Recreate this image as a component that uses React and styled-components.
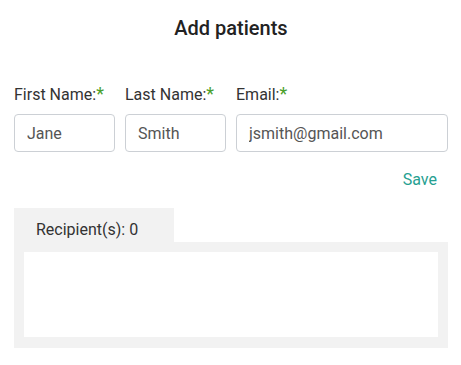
import React from "react";
import styled, { createGlobalStyle } from "styled-components";

const Global = createGlobalStyle`
  html, body { margin: 0; padding: 0; background: #fff; }
  body { font-family: Roboto, "Noto Sans", Arial, sans-serif; }
  * { box-sizing: border-box; }
`;

const Page = styled.div`
  width: 461px;
  padding: 0 13px 0 14px;
  display: flex;
  flex-direction: column;
`;

const Title = styled.h1`
  margin: 0;
  height: 56px;
  line-height: 56px;
  text-align: center;
  font-size: 20px;
  font-weight: 500;
  color: #222;
`;

const FieldsRow = styled.div`
  display: flex;
  gap: 10px;
  margin-top: 26px;
`;

const Field = styled.div`
  display: flex;
  flex-direction: column;
  width: ${(p) => p.$w}px;
  flex: ${(p) => (p.$grow ? "1 1 auto" : "0 0 auto")};
`;

const Label = styled.label`
  font-size: 16px;
  line-height: 24px;
  color: #333;
  white-space: nowrap;
  margin-bottom: 7px;
`;

const Star = styled.span`
  color: #4aa02c;
  font-size: 18px;
`;

const Input = styled.input`
  height: 38px;
  width: 100%;
  border: 1px solid #ccd0d5;
  border-radius: 4px;
  padding: 0 12px;
  font-family: inherit;
  font-size: 16px;
  color: #555;
  outline: none;
  background: #fff;
`;

const SaveRow = styled.div`
  display: flex;
  justify-content: flex-end;
  padding-right: 11px;
  margin-top: 16px;
`;

const SaveButton = styled.button`
  border: none;
  background: none;
  padding: 0;
  font-family: inherit;
  font-size: 16px;
  line-height: 24px;
  color: #26a091;
  cursor: pointer;
`;

const Recipients = styled.div`
  margin-top: 16px;
  display: flex;
  flex-direction: column;
`;

const Tab = styled.div`
  width: 160px;
  height: 34px;
  background: #f2f2f2;
  padding-left: 22px;
  font-size: 16px;
  line-height: 44px;
  color: #333;
`;

const Panel = styled.div`
  background: #f2f2f2;
  padding: 10px;
  height: 106px;
`;

const PanelInner = styled.div`
  background: #fff;
  height: 85px;
`;

export default function App() {
  return (
    <>
      <Global />
      <Page>
        <Title>Add patients</Title>
        <FieldsRow>
          <Field $w={101}>
            <Label>First Name:<Star>*</Star></Label>
            <Input defaultValue="Jane" />
          </Field>
          <Field $w={101}>
            <Label>Last Name:<Star>*</Star></Label>
            <Input defaultValue="Smith" />
          </Field>
          <Field $grow>
            <Label>Email:<Star>*</Star></Label>
            <Input defaultValue="jsmith@gmail.com" />
          </Field>
        </FieldsRow>
        <SaveRow>
          <SaveButton>Save</SaveButton>
        </SaveRow>
        <Recipients>
          <Tab>Recipient(s): 0</Tab>
          <Panel>
            <PanelInner />
          </Panel>
        </Recipients>
      </Page>
    </>
  );
}
